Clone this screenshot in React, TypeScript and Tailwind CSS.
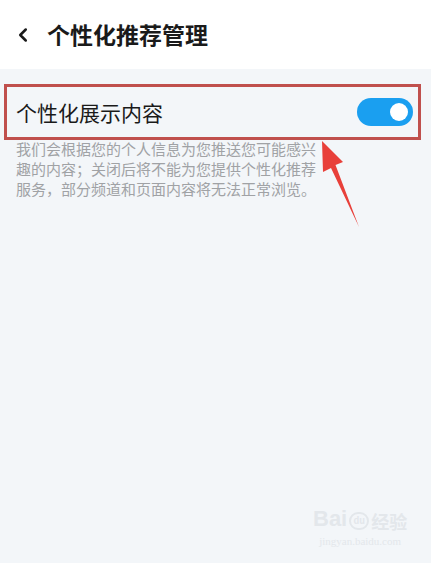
import { ChevronLeft } from "lucide-react"

export default function App() {
  return (
    <div
      className="relative w-[431px] h-[563px] overflow-hidden bg-[#f3f6f9]"
      style={{ fontFamily: '"Noto Sans CJK SC", "Noto Sans", sans-serif' }}
    >
      <header className="h-[69px] bg-white flex items-center pl-[12px]">
        <ChevronLeft className="w-[22px] h-[22px] text-[#1a1a1a]" strokeWidth={2.75} />
        <h1 className="ml-[13px] text-[23px] font-bold text-[#1a1a1a] leading-none">个性化推荐管理</h1>
      </header>

      <div className="pt-[15px]">
        <div className="mx-[4px] w-[417px] h-[56px] border-[3px] border-[#c0504d] flex items-center justify-between pl-[9px] pr-[5px]">
          <span className="text-[21px] text-[#1a1a1a] leading-none">个性化展示内容</span>
          <button className="w-[56px] h-[28px] rounded-full bg-[#1a9ff0] flex items-center justify-end pr-[5px]">
            <span className="w-[18px] h-[18px] rounded-full bg-white" />
          </button>
        </div>
        <p className="mt-[-1px] pl-[16px] w-[327px] text-[15px] leading-[20px] text-[#a0a2a5]">
          我们会根据您的个人信息为您推送您可能感兴趣的内容；关闭后将不能为您提供个性化推荐服务，部分频道和页面内容将无法正常浏览。
        </p>
      </div>

      <svg className="absolute left-0 top-0" width="431" height="563" viewBox="0 0 431 563">
        <polygon
          points="322,141 343,162 335.5,165 359,227 331,168 323,172"
          fill="#e8403a"
        />
      </svg>

      <div className="absolute left-[313px] top-[508px] flex flex-col items-center text-[#e3e7eb]">
        <div className="flex items-end gap-[2px]">
          <span className="text-[22px] font-bold leading-none" style={{ fontFamily: '"Liberation Sans", sans-serif' }}>Bai</span>
          <span className="w-[20px] h-[18px] rounded-full border-2 border-[#e3e7eb] text-[9px] leading-[14px] text-center font-bold">du</span>
          <span className="text-[18px] font-bold leading-none">经验</span>
        </div>
        <span className="text-[11px] leading-none mt-[6px]" style={{ fontFamily: '"Liberation Serif", serif' }}>jingyan.baidu.com</span>
      </div>
    </div>
  )
}
